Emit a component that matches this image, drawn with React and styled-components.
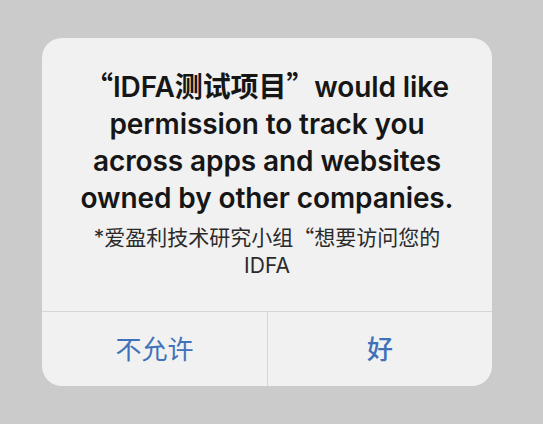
import React from 'react'
import styled, { createGlobalStyle } from 'styled-components'

const Global = createGlobalStyle`
  html, body {
    margin: 0;
    padding: 0;
    background: #cbcbcb;
  }
  body {
    font-family: "Inter", "Noto Sans CJK SC", sans-serif;
  }
`

const Page = styled.div`
  width: 543px;
  height: 424px;
  padding: 38px 0 0 42px;
  box-sizing: border-box;
`

const Card = styled.div`
  width: 450px;
  background: #f1f1f1;
  border-radius: 20px;
  overflow: hidden;
  display: flex;
  flex-direction: column;
`

const Body = styled.div`
  padding: 31px 10px 31px;
  text-align: center;
`

const Title = styled.div`
  font-size: 28px;
  line-height: 37px;
  font-weight: 600;
  color: #161616;
  letter-spacing: -0.1px;
`

// full-width CJK quote marks, kept from growing the line box
const Quote = styled.span`
  font-family: "Noto Sans CJK SC", sans-serif;
  line-height: 0;
`

const Message = styled.div`
  margin-top: 7px;
  font-size: 21px;
  line-height: 28px;
  color: #2a2a2a;
`

const Actions = styled.div`
  display: grid;
  grid-template-columns: 1fr 1fr;
  border-top: 1px solid #d6d6d6;
  height: 74px;
`

const Action = styled.button`
  border: none;
  background: transparent;
  font-family: inherit;
  font-size: 26px;
  font-weight: ${p => (p.$bold ? 500 : 400)};
  color: #3f72ba;
  padding: 0 0 4px;
  border-left: ${p => (p.$divider ? '1px solid #d6d6d6' : 'none')};
`

export default function App() {
  return (
    <Page>
      <Global />
      <Card>
        <Body>
          <Title>
            <Quote>“</Quote>IDFA测试项目<Quote>”</Quote>would like
            <br />
            permission to track you
            <br />
            across apps and websites
            <br />
            owned by other companies.
          </Title>
          <Message>
            *爱盈利技术研究小组<Quote>“</Quote>想要访问您的
            <br />
            IDFA
          </Message>
        </Body>
        <Actions>
          <Action>不允许</Action>
          <Action $divider $bold>好</Action>
        </Actions>
      </Card>
    </Page>
  )
}
